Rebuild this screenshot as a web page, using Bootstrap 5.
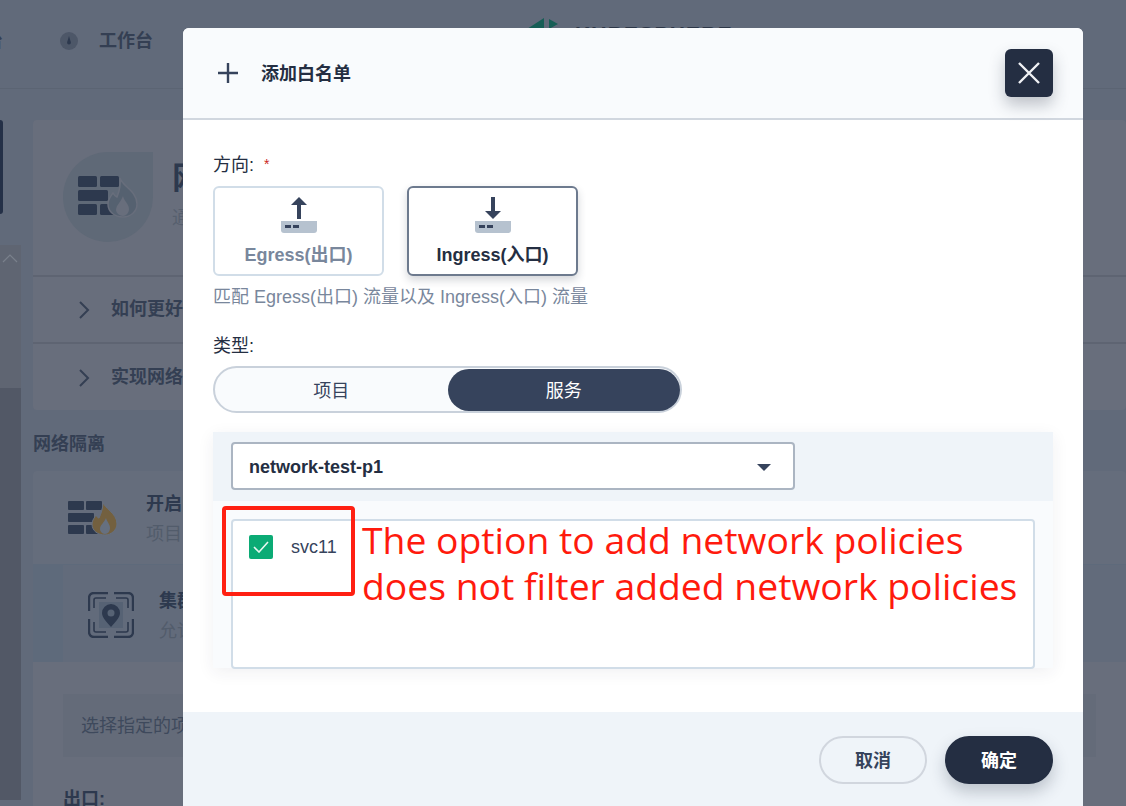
<!DOCTYPE html>
<html lang="zh">
<head>
<meta charset="utf-8">
<title>添加白名单</title>
<link rel="stylesheet" href="https://cdn.jsdelivr.net/npm/bootstrap@5.3.0/dist/css/bootstrap.min.css">
<style>
html,body{margin:0;height:100%;overflow:hidden;}
body{font-family:"Liberation Sans","Noto Sans CJK SC",sans-serif;font-size:18px;color:#242e42;background:#616a7a;}
.stage{position:relative;width:1126px;height:806px;overflow:hidden;background:#616a7a;}
.bg-head{height:89px;border-bottom:1px solid #5b6473;position:relative;padding-bottom:6px;}
.bg-cut{margin-left:-15px;width:18px;font-weight:700;color:#343f53;white-space:nowrap;}
.bg-nav{margin-left:57px;gap:21px;font-weight:700;color:#343f53;}
.bg-logo{position:absolute;left:527px;top:18px;}
.bg-logotext{position:absolute;left:575px;top:22px;font-size:21px;font-weight:700;letter-spacing:1.2px;color:#2d3748;line-height:24px;}
.bg-rail{width:21px;flex:none;}
.rail-item{width:3px;height:94px;margin-top:31px;background:#243047;border-radius:0 4px 4px 0;}
.rail-top{height:143px;margin-top:31px;background:#5f6572;padding:8px 0 0 2px;}
.rail-top svg{display:block;}
.rail-bot{height:412px;background:#525866;}
.bg-main{margin-left:12px;width:1093px;flex:none;}
.bg-card{margin-top:31px;background:#686e7c;border-radius:4px;height:290px;}
.bg-card-head{height:157px;border-bottom:2px solid #5e6472;padding:32px 30px;gap:19px;}
.drop{width:90px;height:90px;background:#5f6977;border-radius:50% 0 50% 50%;flex:none;}
.bg-h1{font-size:32px;font-weight:700;color:#2d394e;line-height:40px;margin-top:6px;}
.bg-sub{color:#565f6e;font-size:18px;line-height:24px;margin-top:8px;}
.bg-row{height:67px;border-bottom:2px solid #5e6472;padding-left:45px;gap:21px;color:#343f53;font-weight:700;}
.bg-row:last-child{border-bottom:0;}
.bg-sec{margin-top:22px;height:39px;font-weight:700;color:#343f53;line-height:24px;}
.bg-en{height:94px;background:#656d7c;border-radius:4px 4px 0 0;border-bottom:1px solid #5e6a7b;padding:30px 0 0 35px;gap:28px;}
.bg-entext{margin-top:-9px;}
.bg-subtext{margin-top:-3px;}
.bg-t{font-weight:700;color:#2d394e;line-height:24px;}
.bg-s{color:#525c6b;line-height:24px;margin-top:6px;}
.bg-subwrap{padding-left:30px;background:#5e6a7b;height:97px;}
.bg-subin{background:#626b7b;height:97px;padding:27px 0 0 25px;gap:25px;}
.bg-lower{background:#686e7c;height:150px;padding:32px 30px;}
.bg-note{height:63px;background:#646b79;padding-left:18px;color:#3e495c;line-height:65px;}
.bg-out{font-weight:700;color:#2d394e;margin-top:30px;line-height:24px;}

.dlg{position:absolute;left:183px;top:28px;width:900px;height:778px;background:#fff;border-radius:6px 6px 0 0;overflow:hidden;display:flex;flex-direction:column;}
.dlg-head{height:92px;flex:none;background:#f9fbfd;border-bottom:2px solid #d1d7df;padding-left:34px;padding-right:30px;}
.dlg-title{font-weight:700;font-size:18px;margin-left:22px;margin-top:3px;color:#242e42;}
.btn-x{width:48px;height:48px;padding:0;border:0;background:#242e42;border-radius:6px;box-shadow:0 8px 16px rgba(36,46,66,.28);margin-left:auto;display:flex;align-items:center;justify-content:center;}
.dlg-body{flex:1;padding:32px 30px 0;}
.lbl{line-height:24px;color:#242e42;}
.lbl i{color:#ca2621;font-style:normal;font-size:14px;margin-left:5px;vertical-align:2px;}
.opt-row{gap:23px;margin-top:9px;}
.opt{width:171px;height:90px;border:2px solid #d1dde8;border-radius:6px;background:#fff;text-align:center;padding-top:9px;font-weight:700;color:#79879c;}
.opt.on{border-color:#6d7a8e;color:#242e42;box-shadow:0 4px 8px rgba(36,46,66,.2);}
.opt svg{display:block;margin:0 auto;}
.opt span{display:block;line-height:24px;margin-top:10px;}
.hint{color:#79879c;line-height:24px;margin-top:9px;}
.lbl2{margin-top:25px;}
.seg{width:469px;height:47px;border:2px solid #c9d1db;border-radius:24px;background:#f9fbfd;margin-top:8px;padding:1px 0 0;}
.seg div{flex:1;border-radius:22px;text-align:center;line-height:44px;height:42px;color:#36435c;}
.seg .act{background:#36435c;color:#fff;}
.pane{margin-top:19px;height:236px;box-shadow:0 4px 16px rgba(36,46,66,.07);background:#f9fbfd;}
.pane-head{height:69px;background:#eff4f9;padding:10px 18px;}
.sel{width:564px;height:48px;background:#fff;border:2px solid #abb5c2;border-radius:4px;padding:2px 16px 0;font-weight:700;color:#242e42;}
.caret-d{width:0;height:0;border-left:7px solid transparent;border-right:7px solid transparent;border-top:7px solid #36435c;margin-left:auto;margin-right:6px;}
.lst{margin:18px 18px 0;height:150px;background:#fff;border:2px solid #d1dde8;border-radius:4px;padding:14px 16px;gap:18px;}
.chk{width:24px;height:24px;background:#0bab75;border-radius:2px;display:flex;align-items:center;justify-content:center;flex:none;}
.svc{color:#36435c;line-height:24px;}
.dlg-foot{height:94px;flex:none;background:#eff4f9;padding:24px 30px;gap:18px;}
.pill{width:108px;height:48px;border-radius:24px;font-weight:700;font-size:18px;padding:2px 0 0;line-height:42px;}
.pill-o{background:transparent;border:2px solid #d1d6de;color:#36435c;}
.pill-d{background:#242e42;border:2px solid #242e42;color:#fff;box-shadow:0 8px 16px rgba(36,46,66,.25);}
.redbox{position:absolute;left:222px;top:506px;width:133px;height:90px;border:4px solid #ff2012;border-radius:4px;}
.note{position:absolute;left:362px;top:517px;font-family:"Open Sans",sans-serif;font-size:37.3px;line-height:46px;color:#ff1a0d;white-space:nowrap;}
</style>
</head>
<body>
<div class="stage">
  <div class="bg-head d-flex align-items-center">
    <div class="bg-cut overflow-hidden">台</div>
    <div class="bg-nav d-flex align-items-center">
      <svg width="18" height="18" viewBox="0 0 18 18"><circle cx="9" cy="9" r="9" fill="#4d5768"/><path d="M9 4l1.8 6a1.9 1.9 0 1 1-3.6 0z" fill="#2d394e"/></svg>
      <span>工作台</span>
    </div>
    <svg class="bg-logo" width="32" height="12" viewBox="0 0 32 12"><path d="M0 11 17 0v11z" fill="#175e56"/><path d="M22 1l9 5-9 5z" fill="#175e56"/></svg>
    <div class="bg-logotext">KUBESPHERE</div>
  </div>
  <div class="d-flex">
    <div class="bg-rail">
      <div class="rail-item"></div>
      <div class="rail-top"><svg width="16" height="10" viewBox="0 0 16 10"><path d="M1 9l7-7 7 7" fill="none" stroke="#7a808c" stroke-width="1.2"/></svg></div>
      <div class="rail-bot"></div>
    </div>
    <div class="bg-main">
      <div class="bg-card">
        <div class="bg-card-head d-flex">
          <div class="drop d-flex align-items-center justify-content-center">
            <svg width="60" height="42" viewBox="0 0 60 42"><g fill="#2d394e"><rect x="0" y="0" width="19" height="11" rx="1.5"/><rect x="22" y="0" width="19" height="11" rx="1.5"/><rect x="0" y="14" width="30" height="11" rx="1.5"/><rect x="0" y="28" width="19" height="11" rx="1.5"/><rect x="22" y="28" width="19" height="11" rx="1.5"/></g><path d="M42 2c2 8 17 13 17 26 0 8-7 13-14 13-8 0-15-5-15-13 0-5 3-8 5-11 1 2 2 3 4 4 2-5 4-12 3-19z" fill="#556170" stroke="#686e7c" stroke-width="1.5"/><path d="M45 20c1 5 6 8 6 13 0 4-3 7-6 7s-7-3-7-6c0-5 5-8 7-14z" fill="#686e7c"/></svg>
          </div>
          <div>
            <div class="bg-h1">网络策略</div>
            <div class="bg-sub">通过配置网络策略</div>
          </div>
        </div>
        <div class="bg-row d-flex align-items-center">
          <svg width="12" height="18" viewBox="0 0 12 18"><path d="M2 1l8 8-8 8" fill="none" stroke="#343f53" stroke-width="2"/></svg>
          <span class="text-nowrap">如何更好地</span>
        </div>
        <div class="bg-row d-flex align-items-center">
          <svg width="12" height="18" viewBox="0 0 12 18"><path d="M2 1l8 8-8 8" fill="none" stroke="#343f53" stroke-width="2"/></svg>
          <span class="text-nowrap">实现网络</span>
        </div>
      </div>
      <div class="bg-sec">网络隔离</div>
      <div class="bg-en d-flex">
        <svg width="50" height="35" viewBox="0 0 50 35"><g fill="#2d394e"><rect x="0" y="0" width="16" height="9" rx="1"/><rect x="18" y="0" width="16" height="9" rx="1"/><rect x="0" y="12" width="26" height="9" rx="1"/><rect x="0" y="24" width="16" height="9" rx="1"/><rect x="18" y="24" width="16" height="9" rx="1"/></g><path d="M35 1c1 6 14 11 14 22 0 6-6 11-12 11-7 0-13-4-13-11 0-4 3-7 4-9 1 2 2 3 3 3 2-4 4-10 4-16z" fill="#73603f" stroke="#667080"/><path d="M38 17c1 4 4 6 4 10 0 3-2 6-5 6s-5-3-5-5c0-4 4-6 6-11z" fill="#667080"/></svg>
        <div class="bg-entext">
          <div class="bg-t">开启网络隔离</div>
          <div class="bg-s">项目</div>
        </div>
      </div>
      <div class="bg-subwrap">
        <div class="bg-subin d-flex">
          <svg width="46" height="46" viewBox="0 0 46 46" fill="none" stroke="#2d394e" stroke-width="2.4"><path d="M1 19V6a5 5 0 0 1 5-5h14M26 1h14a5 5 0 0 1 5 5v13M45 27v13a5 5 0 0 1-5 5H26M20 45H6a5 5 0 0 1-5-5V27"/><path d="M6 16V8a2 2 0 0 1 2-2h10M28 6h10a2 2 0 0 1 2 2v8M40 30v8a2 2 0 0 1-2 2H28M18 40H8a2 2 0 0 1-2-2v-8" stroke-width="1.6"/><rect x="11" y="10" width="24" height="26" fill="#566274" stroke="none"/><path d="M23 12a9 9 0 0 1 9 9c0 5-5 9-9 14-4-5-9-9-9-14a9 9 0 0 1 9-9z" fill="#2d394e" stroke="none"/><circle cx="23" cy="21" r="3.5" fill="#566274" stroke="none"/></svg>
          <div class="bg-subtext">
            <div class="bg-t">集群内部</div>
            <div class="bg-s">允许</div>
          </div>
        </div>
      </div>
      <div class="bg-lower">
        <div class="bg-note">选择指定的项目</div>
        <div class="bg-out">出口:</div>
      </div>
    </div>
  </div>

  <div class="dlg">
    <div class="dlg-head d-flex align-items-center">
      <svg width="22" height="22" viewBox="0 0 22 22"><path d="M11 1v20M1 11h20" stroke="#36435c" stroke-width="2.4"/></svg>
      <div class="dlg-title">添加白名单</div>
      <button class="btn-x" type="button" aria-label="关闭"><svg width="22" height="22" viewBox="0 0 22 22"><path d="M1 1l20 20M21 1L1 21" stroke="#f0f2f5" stroke-width="2.4"/></svg></button>
    </div>
    <div class="dlg-body">
      <div class="lbl">方向: <i>*</i></div>
      <div class="opt-row d-flex">
        <div class="opt">
          <svg width="36" height="36" viewBox="0 0 36 36"><path d="M0 24h36v9a3 3 0 0 1-3 3H3a3 3 0 0 1-3-3z" fill="#b6c2cf"/><rect x="4" y="28" width="6" height="3" fill="#36435c"/><rect x="12" y="28" width="6" height="3" fill="#36435c"/><path d="M18 0l8 8h-6v14h-4V8h-6z" fill="#36435c"/></svg>
          <span>Egress(出口)</span>
        </div>
        <div class="opt on">
          <svg width="36" height="36" viewBox="0 0 36 36"><path d="M0 24h36v9a3 3 0 0 1-3 3H3a3 3 0 0 1-3-3z" fill="#b6c2cf"/><rect x="4" y="28" width="6" height="3" fill="#36435c"/><rect x="12" y="28" width="6" height="3" fill="#36435c"/><path d="M18 22l-8-8h6V0h4v14h6z" fill="#36435c"/></svg>
          <span>Ingress(入口)</span>
        </div>
      </div>
      <div class="hint">匹配 Egress(出口) 流量以及 Ingress(入口) 流量</div>
      <div class="lbl lbl2">类型:</div>
      <div class="seg d-flex">
        <div>项目</div>
        <div class="act">服务</div>
      </div>
      <div class="pane">
        <div class="pane-head">
          <div class="sel d-flex align-items-center">network-test-p1<span class="caret-d"></span></div>
        </div>
        <div class="lst d-flex align-items-start">
          <span class="chk"><svg width="16" height="12" viewBox="0 0 16 12"><path d="M1 6l5 5 9-10" fill="none" stroke="#e8f7f1" stroke-width="1.6"/></svg></span>
          <span class="svc">svc11</span>
        </div>
      </div>
    </div>
    <div class="dlg-foot d-flex justify-content-end">
      <button class="pill pill-o" type="button">取消</button>
      <button class="pill pill-d" type="button">确定</button>
    </div>
  </div>

  <div class="redbox"></div>
  <div class="note">The option to add network policies<br>does not filter added network policies</div>
</div>
<script src="https://cdn.jsdelivr.net/npm/bootstrap@5.3.0/dist/js/bootstrap.bundle.min.js"></script>
</body>
</html>
